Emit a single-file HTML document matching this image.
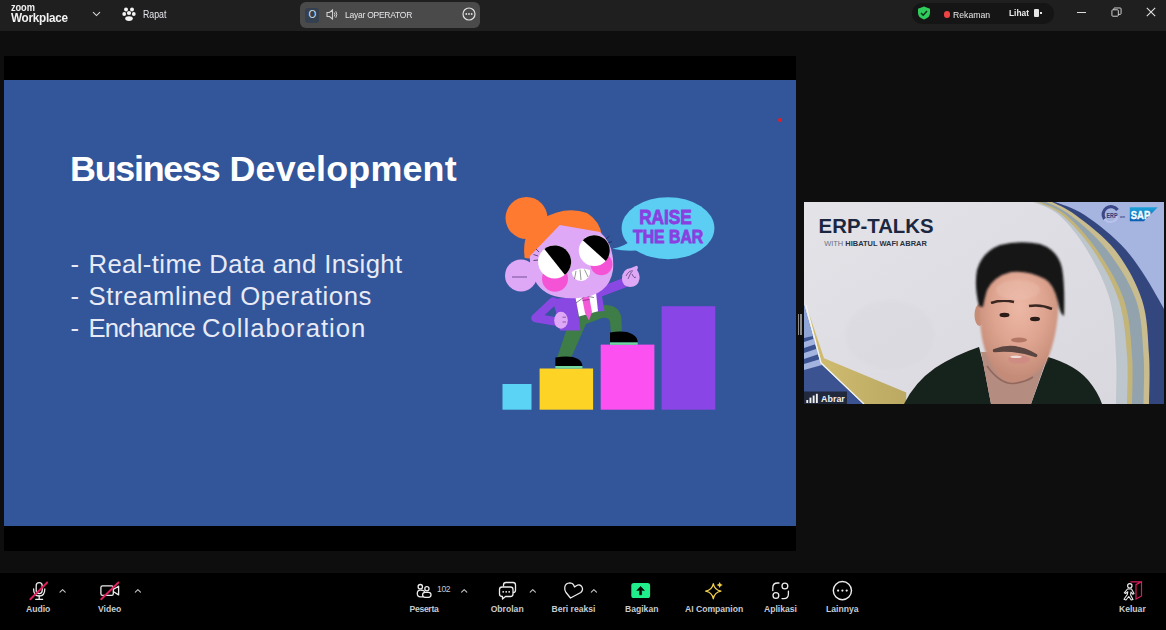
<!DOCTYPE html>
<html><head><meta charset="utf-8">
<style>
*{margin:0;padding:0;box-sizing:border-box}
html,body{width:1166px;height:630px;overflow:hidden;background:#0e0e0e;font-family:"Liberation Sans",sans-serif}
.a{position:absolute}
.t{position:absolute;white-space:nowrap;line-height:1}
#top{left:0;top:0;width:1166px;height:31px;background:#1f1f1f}
#bar{left:0;top:573px;width:1166px;height:57px;background:#000}
.lbl{position:absolute;white-space:nowrap;line-height:1;color:#c9cbcf;font-weight:bold;font-size:8.6px;top:604.6px}
</style></head>
<body>
<!-- TOP BAR -->
<div id="top" class="a">
  <div class="t" style="left:10.8px;top:1.6px;font-size:10.5px;font-weight:bold;color:#f2f2f2;letter-spacing:-0.1px;transform:scaleX(0.88);transform-origin:0 0">zoom</div>
  <div class="t" style="left:11px;top:11px;font-size:13.4px;font-weight:bold;color:#f2f2f2;letter-spacing:-0.3px;transform:scaleX(0.875);transform-origin:0 0">Workplace</div>
  <svg class="a" style="left:92px;top:11px" width="9" height="6" viewBox="0 0 9 6"><path d="M1 1.2 L4.5 4.6 L8 1.2" fill="none" stroke="#d8d8d8" stroke-width="1.1"/></svg>
  <svg class="a" style="left:122px;top:7px" width="14" height="14" viewBox="0 0 14 14" fill="#f4f4f4">
    <circle cx="4" cy="2.6" r="2"/><circle cx="10" cy="2.6" r="2"/><circle cx="7" cy="6" r="2.1"/>
    <circle cx="2.2" cy="7" r="1.9"/><circle cx="11.8" cy="7" r="1.9"/><ellipse cx="7" cy="11.6" rx="3.8" ry="2.3"/>
  </svg>
  <div class="t" style="left:143.3px;top:10.2px;font-size:10px;color:#e6e8ee;transform:scaleX(0.876);transform-origin:0 0">Rapat</div>

  <div class="a" style="left:300px;top:2px;width:180px;height:26px;border-radius:6px;background:#4a4a4a"></div>
  <div class="a" style="left:305px;top:8px;width:14px;height:15px;border-radius:3px;background:#34404f"></div>
  <div class="t" style="left:308.5px;top:10px;font-size:10px;color:#cfe0f0">O</div>
  <svg class="a" style="left:326px;top:9px" width="12" height="11" viewBox="0 0 12 11"><path d="M1 3.5 H3.5 L6.5 1 V10 L3.5 7.5 H1 Z" fill="none" stroke="#cfcfcf" stroke-width="1.1"/><path d="M8.3 3.5 Q9.6 5.5 8.3 7.5 M9.8 2.2 Q11.8 5.5 9.8 8.8" fill="none" stroke="#cfcfcf" stroke-width="1"/></svg>
  <div class="t" style="left:344.5px;top:10.3px;font-size:9.9px;color:#e6e6ea;letter-spacing:-0.3px;transform:scaleX(0.863);transform-origin:0 0">Layar OPERATOR</div>
  <svg class="a" style="left:462px;top:7px" width="14" height="14" viewBox="0 0 14 14"><circle cx="7" cy="7" r="6" fill="none" stroke="#e0e0e0" stroke-width="1.2"/><circle cx="4.3" cy="7" r="0.9" fill="#e0e0e0"/><circle cx="7" cy="7" r="0.9" fill="#e0e0e0"/><circle cx="9.7" cy="7" r="0.9" fill="#e0e0e0"/></svg>

  <div class="a" style="left:912px;top:3px;width:142px;height:21px;border-radius:10px;background:#151515"></div>
  <svg class="a" style="left:917px;top:6px" width="14" height="14" viewBox="0 0 14 14"><path d="M7 0.5 L13 2.8 V7 Q13 11.5 7 13.5 Q1 11.5 1 7 V2.8 Z" fill="#2fcc5c"/><path d="M4 7 L6.2 9.2 L10 5" fill="none" stroke="#10301a" stroke-width="1.5"/></svg>
  <div class="a" style="left:943.5px;top:11px;width:6.5px;height:6.5px;border-radius:50%;background:#ec4444"></div>
  <div class="t" style="left:953px;top:10.3px;font-size:9.8px;color:#e8e8ea;transform:scaleX(0.885);transform-origin:0 0">Rekaman</div>
  <div class="t" style="left:1008.5px;top:7.8px;font-size:9.6px;color:#eaeaea;transform:scaleX(0.87);transform-origin:0 0;font-weight:bold">Lihat</div>
  <div class="a" style="left:1034px;top:9px;width:5px;height:8px;background:#e6e6e6;border-radius:1px"></div>
  <div class="a" style="left:1040px;top:12px;width:2px;height:2px;background:#e6e6e6"></div>

  <div class="a" style="left:1077px;top:12px;width:9px;height:1px;background:#dcdcdc"></div>
  <svg class="a" style="left:1110.5px;top:7.3px" width="11" height="10.2" viewBox="0 0 12 11"><rect x="1" y="3" width="7" height="7" rx="1" fill="none" stroke="#dedede" stroke-width="1"/><path d="M3 3 V2 Q3 1 4 1 H10 Q11 1 11 2 V7 Q11 8 10 8 H8" fill="none" stroke="#dedede" stroke-width="1"/></svg>
  <svg class="a" style="left:1146px;top:7px" width="10" height="10" viewBox="0 0 10 10"><path d="M0.8 0.8 L9.2 9.2 M9.2 0.8 L0.8 9.2" stroke="#e2e2e2" stroke-width="1.1"/></svg>
</div>

<!-- SLIDE -->
<div class="a" style="left:4px;top:56px;width:792px;height:495px;background:#000"></div>
<div class="a" id="slide" style="left:4px;top:80px;width:792px;height:446px;background:#325699"></div>
<div class="t" style="left:70px;top:152.2px;font-size:35.9px;font-weight:bold;color:#fff;letter-spacing:-1.28px">Business</div>
<div class="t" style="left:229.5px;top:152.2px;font-size:35.9px;font-weight:bold;color:#fff;letter-spacing:0.18px">Development</div>
<div class="t" style="left:70.5px;top:252.4px;font-size:25.7px;color:#e8eaf6">-</div>
<div class="t" style="left:88.5px;top:252.4px;font-size:25.7px;color:#e8eaf6;letter-spacing:0.38px">Real-time Data and Insight</div>
<div class="t" style="left:70.5px;top:284.2px;font-size:25.7px;color:#e8eaf6">-</div>
<div class="t" style="left:88.5px;top:284.2px;font-size:25.7px;color:#e8eaf6;letter-spacing:0.62px">Streamlined Operations</div>
<div class="t" style="left:70.5px;top:316.1px;font-size:25.7px;color:#e8eaf6">-</div>
<div class="t" style="left:88.5px;top:316.1px;font-size:25.7px;color:#e8eaf6;letter-spacing:-1.0px">Enchance</div>
<div class="t" style="left:202px;top:316.1px;font-size:25.7px;color:#e8eaf6;letter-spacing:1.0px">Collaboration</div>
<div class="a" style="left:777.5px;top:118px;width:4px;height:4px;border-radius:50%;background:#e02020"></div>
<svg class="a" style="left:0;top:0" width="1166" height="630" viewBox="0 0 1166 630">
  <!-- bars -->
  <rect x="502.5" y="384" width="29" height="25.7" fill="#5ad3f5"/>
  <rect x="539.6" y="368.5" width="53.5" height="41.2" fill="#fdd326"/>
  <rect x="600.7" y="344.6" width="53.7" height="65.1" fill="#fd50f0"/>
  <rect x="661.6" y="306.2" width="53.7" height="103.5" fill="#8945e6"/>
  <!-- speech bubble -->
  <path d="M612.4 248.8 Q626 246 631 240 L640 250 Q628 252 612.4 248.8Z" fill="#5ccdf3"/>
  <ellipse cx="668" cy="228.2" rx="46.4" ry="31" fill="#5ccdf3"/>
  <text x="639.2" y="224" font-family="Liberation Sans" font-weight="bold" font-size="20" fill="#8a3fe0" stroke="#8a3fe0" stroke-width="0.9" textLength="52.6" lengthAdjust="spacingAndGlyphs">RAISE</text>
  <text x="633" y="242.6" font-family="Liberation Sans" font-weight="bold" font-size="19" fill="#8a3fe0" stroke="#8a3fe0" stroke-width="0.9" textLength="70.2" lengthAdjust="spacingAndGlyphs">THE BAR</text>
  <!-- legs -->
  <path d="M578 309 L606 305 Q621 306 621.5 320 L622 334 L611 334 L610 322 Q609 317 602 318 L586 324 L571 358 L557 358 L567 328 Z" fill="#3e7c48"/>
  <!-- shoes -->
  <path d="M555.4 366 L555.4 357.5 Q571 355 578 359 Q582.4 362 582.4 366 Z" fill="#000"/>
  <rect x="555.4" y="366" width="27" height="2.6" fill="#72d8a0"/>
  <path d="M610 342.4 L610 332.5 Q625 330 632 334 Q637.7 337 637.7 342.4 Z" fill="#000"/>
  <rect x="610" y="342.4" width="27.7" height="2.4" fill="#72d8a0"/>
  <!-- jacket -->
  <path d="M552 299 L576 297 L580.5 330.4 L560 330.4 L556 312 Z" fill="#8a48e2"/>
  <path d="M553 301.5 L535.5 318 L556 321.5" stroke="#8a48e2" stroke-width="8.5" fill="none" stroke-linecap="round" stroke-linejoin="round"/>
  <path d="M589 291 L601 290.5 L604.5 311 L592 312 Z" fill="#8a48e2"/>
  <path d="M596 293.5 L625 282.5" stroke="#8a48e2" stroke-width="9.5" fill="none" stroke-linecap="round"/>
  <!-- shirt & tie -->
  <path d="M575.5 297.7 L596 292.5 L598 311.2 L579 316.4 Z" fill="#fff"/>
  <path d="M582 297.5 L589 295.8 L592 312 L589 320.4 L585 313 Z" fill="#f25ad8"/>
  <path d="M576 303 L585.5 296 L594 297.5" stroke="#3a2a50" stroke-width="0.6" fill="none"/>
  <path d="M582.5 300.5 L589.5 299.5" stroke="#8a2a80" stroke-width="0.8"/>
  <!-- hands -->
  <ellipse cx="561" cy="320.2" rx="6.8" ry="8.5" fill="#dea8f6"/>
  <path d="M562.5 317.2 h3.5 M562.5 322 h3.5" stroke="#6a3a90" stroke-width="0.7"/>
  <path d="M622 279 Q622 269 631 268 L636.5 265.8 Q639 266.5 637 270 Q640 274 639.5 279 Q638 287 630 287 Q622 286 622 279 Z" fill="#dea8f6"/>
  <path d="M626 276 Q629 270 633 271 M628 279 Q630 274 631.5 272 M632 274 Q634 279 636 277" stroke="#3a2050" stroke-width="0.6" fill="none"/>
  <!-- hair -->
  <circle cx="526.5" cy="218" r="21" fill="#fd7a30"/>
  <path d="M524.7 258 Q521 232 540 220 Q565 205 587 213 Q600 221 602 236 L560 262 Z" fill="#fd7a30"/>
  <!-- ear -->
  <circle cx="521" cy="275.5" r="16" fill="#dea8f6"/>
  <path d="M512 277 H527" stroke="#5a3a80" stroke-width="0.8"/>
  <!-- head -->
  <path d="M559.8 225 L600 232 Q615 245 613 270 Q609 296 578 298 Q548 300 537 284 Q529 272 530 256 Z" fill="#dea8f6"/>
  <!-- cheeks -->
  <circle cx="555" cy="278.7" r="13" fill="#f553d6"/>
  <circle cx="601.4" cy="264.3" r="11" fill="#f553d6"/>
  <!-- eyes -->
  <circle cx="554.6" cy="261.9" r="16.5" fill="#fff"/>
  <path d="M544.37 248.95 A16.5 16.5 0 0 1 564.83 274.85 Z" fill="#000"/>
  <circle cx="594.3" cy="250.6" r="15.5" fill="#fff"/>
  <path d="M582.78 240.23 A15.5 15.5 0 0 1 605.82 260.97 Z" fill="#000"/>
  <path d="M538 256 l-4.5 -1.5 M538 260 l-4.5 0.5 M539 252 l-3 -3" stroke="#2a1a40" stroke-width="0.7"/>
  <path d="M606 239 l3.5 -3 M608 243 l4 -1.5" stroke="#2a1a40" stroke-width="0.7"/>
  <!-- teeth -->
  <path d="M571.7 272 Q580 266 590 270 Q591 279 582 281 Q573 281 571.7 272Z" fill="#fff"/>
  <path d="M576 271 L574.5 279 M580 269.5 L581 280 M584.5 269.5 L588 277" stroke="#333" stroke-width="0.5"/>
</svg>

<!-- VIDEO -->
<div class="a" style="left:798px;top:314px;width:1.4px;height:21px;background:#8a8a8a"></div>
<div class="a" style="left:800.4px;top:314px;width:1.4px;height:21px;background:#8a8a8a"></div>
<svg class="a" id="video" style="left:804px;top:202px" width="360" height="202" viewBox="804 202 360 202">
  <defs>
    <linearGradient id="bgG" x1="0" y1="0" x2="1" y2="1">
      <stop offset="0" stop-color="#e4e3e8"/><stop offset="0.5" stop-color="#dedde3"/><stop offset="1" stop-color="#d8d8de"/>
    </linearGradient>
    <linearGradient id="goldG" x1="0" y1="0" x2="1" y2="0">
      <stop offset="0" stop-color="#d2bf72"/><stop offset="1" stop-color="#bba862"/>
    </linearGradient>
    <radialGradient id="skinG" cx="0.5" cy="0.35" r="0.6">
      <stop offset="0" stop-color="#ecb8a6"/><stop offset="0.55" stop-color="#dea490"/><stop offset="1" stop-color="#c48c78"/>
    </radialGradient>
    <filter id="bl" x="-10%" y="-10%" width="120%" height="120%"><feGaussianBlur stdDeviation="1.2"/></filter>
    <filter id="bl2" x="-20%" y="-20%" width="140%" height="140%"><feGaussianBlur stdDeviation="0.6"/></filter>
    <filter id="bl3" x="-20%" y="-20%" width="140%" height="140%"><feGaussianBlur stdDeviation="0.9"/></filter>
  </defs>
  <rect x="804" y="202" width="360" height="202" fill="#a6b5e0"/>
  <path d="M804 202 L1055.0 202.0 C1059.9 204.2 1072.8 207.0 1084.6 215.0 C1096.4 223.0 1113.6 235.8 1126.0 250.0 C1138.4 264.2 1151.7 286.7 1159.0 300.0 C1166.3 313.3 1167.2 312.7 1170.0 330.0 C1172.8 347.3 1175.0 391.7 1176.0 404.0 L804 404 Z" fill="#34467e"/>
  <path d="M804 202 L1052.0 202.0 C1055.9 204.2 1065.0 207.0 1075.5 215.0 C1086.0 223.0 1103.9 235.8 1115.0 250.0 C1126.1 264.2 1136.3 282.5 1142.0 300.0 C1147.7 317.5 1147.8 337.7 1149.0 355.0 C1150.2 372.3 1149.0 395.8 1149.0 404.0 L804 404 Z" fill="#c9bc8e"/>
  <path d="M804 202 L1046.0 202.0 C1050.0 204.2 1059.8 207.0 1070.0 215.0 C1080.2 223.0 1096.0 235.8 1107.0 250.0 C1118.0 264.2 1129.9 282.5 1136.0 300.0 C1142.1 317.5 1142.2 337.7 1143.5 355.0 C1144.8 372.3 1143.5 395.8 1143.5 404.0 L804 404 Z" fill="#92a3ad"/>
  <path d="M804 202 L1040.0 202.0 C1044.3 204.2 1056.5 207.0 1066.0 215.0 C1075.5 223.0 1087.3 235.8 1097.0 250.0 C1106.7 264.2 1118.2 282.5 1124.0 300.0 C1129.8 317.5 1130.7 337.7 1132.0 355.0 C1133.3 372.3 1132.0 395.8 1132.0 404.0 L804 404 Z" fill="#c3b47a"/>
  <path d="M804 202 L1037.0 202.0 C1041.2 204.2 1052.7 207.0 1062.0 215.0 C1071.3 223.0 1083.5 235.8 1093.0 250.0 C1102.5 264.2 1113.0 282.5 1118.7 300.0 C1124.4 317.5 1125.6 337.7 1127.0 355.0 C1128.4 372.3 1127.0 395.8 1127.0 404.0 L804 404 Z" fill="#bcc6cc"/>
  <path d="M804 202 L1033.0 202.0 C1037.3 204.2 1050.0 207.0 1059.0 215.0 C1068.0 223.0 1078.5 235.8 1087.0 250.0 C1095.5 264.2 1105.2 282.5 1110.0 300.0 C1114.8 317.5 1115.0 337.7 1116.0 355.0 C1117.0 372.3 1116.0 395.8 1116.0 404.0 L804 404 Z" fill="url(#bgG)"/>
  <ellipse cx="890" cy="335" rx="45" ry="35" fill="#cfcfd5" opacity="0.15" filter="url(#bl)"/>
  <!-- left deco -->
  <path d="M804 305 L820.6 363.4 L863.4 404 L804 404 Z" fill="#3c5391"/>
  <path d="M804 305 L813 336 L804 338 Z" fill="#8fa5d8"/>
  <path d="M804 342 L814.5 338.5 L816 344 L804 348 Z" fill="#a3b4e0"/>
  <path d="M804 353 L817.5 348.5 L819 354 L804 359 Z" fill="#a3b4e0"/>
  <path d="M804 364 L820.5 359 L822 365 L804 370 Z" fill="#a3b4e0"/>
  <path d="M806.5 306 L824 358.3 L906.3 392.6 L906 404 L864 404 L821.5 363 Z" fill="url(#goldG)"/>
  <path d="M806 305 L821 363 L864 404" stroke="#f4f4f2" stroke-width="1.3" fill="none"/>
  <!-- person -->
  <path d="M904 404 Q915 382 935 368 Q955 355 979 347 L983 362 L991 404 Z" fill="#19201c" filter="url(#bl2)"/>
  <path d="M1031 404 L1048 357 Q1075 365 1088 380 Q1098 392 1102 404 Z" fill="#19201c" filter="url(#bl2)"/>
  <path d="M981 352 L1049 352 L1031 404 L991 404 Z" fill="#b48c80" filter="url(#bl2)"/>
  <ellipse cx="979.5" cy="315" rx="5" ry="11" fill="#c68c76" filter="url(#bl2)"/>
  <path d="M980 296 Q978 336 988 358 Q1000 383 1013 383.5 Q1030 382 1046 362 Q1058 338 1059 296 Q1057 268 1020 266 Q983 268 980 296 Z" fill="url(#skinG)" filter="url(#bl3)"/>
  <path d="M987 366 Q1000 384 1013 383.5 Q1026 382 1033 377" stroke="#7a5048" stroke-width="1.6" fill="none" opacity="0.6" filter="url(#bl2)"/>
  <ellipse cx="1018" cy="290" rx="22" ry="10" fill="#f0c4b6" opacity="0.35" filter="url(#bl)"/>
  <path d="M979 306 Q974 286 977 270 Q982 252 1000 245 Q1020 240 1040 244 Q1058 250 1062 268 Q1065 285 1064 316 Q1060 314 1058 302 Q1054 284 1045 279 Q1028 270 1011 272 Q994 276 987 290 Q984 300 983 307 Z" fill="#171918" filter="url(#bl3)"/>
  <path d="M991 303 Q1002 299 1014 302" stroke="#3a2822" stroke-width="2.6" fill="none" filter="url(#bl2)"/>
  <path d="M1029 306 Q1041 304 1052 309" stroke="#3a2822" stroke-width="2.6" fill="none" filter="url(#bl2)"/>
  <ellipse cx="1004.5" cy="315" rx="5" ry="2.2" fill="#2a1a18" filter="url(#bl2)"/>
  <ellipse cx="1035" cy="319" rx="5" ry="2.2" fill="#2a1a18" filter="url(#bl2)"/>
  <ellipse cx="1019" cy="340" rx="8" ry="2.6" fill="#a86a5a" opacity="0.8" filter="url(#bl2)"/>
  <ellipse cx="1019" cy="359.5" rx="11" ry="4.2" fill="#cf8c82" filter="url(#bl2)"/>
  <ellipse cx="1016" cy="356.8" rx="6" ry="1.3" fill="#f0dcd4" filter="url(#bl2)"/>
  <path d="M994.5 350.5 Q1015 342.5 1035.6 355.5 Q1015 348.5 994.5 350.5 Z" stroke="#5a4440" stroke-width="3.4" fill="#5a4440" stroke-linejoin="round" filter="url(#bl2)"/>
  <!-- text -->
  <text x="818.6" y="233.3" font-family="Liberation Sans" font-weight="bold" font-size="20.3" fill="#1b2740" textLength="115" lengthAdjust="spacingAndGlyphs">ERP-TALKS</text>
  <text x="824.2" y="245.5" font-family="Liberation Sans" font-weight="bold" font-size="8.1" fill="#2a3040" textLength="102.6" lengthAdjust="spacingAndGlyphs"><tspan fill="#6b707c" font-weight="normal">WITH </tspan>HIBATUL WAFI ABRAR</text>
  <!-- logos -->
  <path d="M1104.5 219 A7.2 7.2 0 1 1 1117.5 210" stroke="#3a4788" stroke-width="3.2" fill="none"/>
  <path d="M1117.5 216 A7.2 7.2 0 0 1 1104.5 219" stroke="#b8c2ea" stroke-width="2" fill="none"/>
  <text x="1106.5" y="218" font-family="Liberation Sans" font-weight="bold" font-size="7" fill="#2e3a7a" textLength="11" lengthAdjust="spacingAndGlyphs">ERP</text>
  <text x="1120" y="217.5" font-family="Liberation Sans" font-weight="bold" font-size="4" fill="#3a4788">on</text>
  <linearGradient id="sapG" x1="0" y1="0" x2="0" y2="1"><stop offset="0" stop-color="#1ea2da"/><stop offset="1" stop-color="#0b5cb0"/></linearGradient>
  <path d="M1129.8 207.3 L1157.8 207.3 L1143.8 221.3 L1129.8 221.3 Z" fill="url(#sapG)"/>
  <text x="1130.8" y="219" font-family="Liberation Sans" font-weight="bold" font-size="11" fill="#f2fbff" stroke="#f2fbff" stroke-width="0.4" textLength="19.5" lengthAdjust="spacingAndGlyphs">SAP</text>
  <!-- label -->
  <rect x="804" y="391.5" width="43" height="12.5" fill="#1c2029" opacity="0.82"/>
  <rect x="806.3" y="400" width="1.9" height="3" fill="#f0f0f0"/>
  <rect x="809.5" y="397.6" width="1.9" height="5.4" fill="#f0f0f0"/>
  <rect x="812.7" y="395.5" width="1.9" height="7.5" fill="#f0f0f0"/>
  <rect x="815.9" y="393.8" width="1.9" height="9.2" fill="#f0f0f0"/>
  <text x="821.1" y="402.1" font-family="Liberation Sans" font-weight="bold" font-size="9.6" fill="#eef0f0" textLength="23.7" lengthAdjust="spacingAndGlyphs">Abrar</text>
</svg>

<!-- TOOLBAR -->
<div id="bar" class="a"></div>
<svg class="a" style="left:0;top:573px" width="1166" height="57" viewBox="0 573 1166 57">
  <g fill="none" stroke="#ececec" stroke-width="1.3" stroke-linecap="round" stroke-linejoin="round">
    <!-- audio -->
    <rect x="36.2" y="582.6" width="6" height="11" rx="3"/>
    <path d="M33.6 589 Q33.6 596 39.2 596 Q44.8 596 44.8 589"/>
    <path d="M39.2 596 V599.3 M35.8 599.4 H42.6"/>
    <path d="M60 592.2 L62.6 589.7 L65.2 592.2" stroke="#c4c4c4" stroke-width="1.1"/>
    <!-- video -->
    <rect x="100.9" y="585.9" width="12.4" height="9.4" rx="1.6"/>
    <path d="M113.6 589.3 L118.6 586.2 V594.9 L113.6 591.8"/>
    <path d="M135.3 592.2 L137.9 589.7 L140.5 592.2" stroke="#c4c4c4" stroke-width="1.1"/>
    <!-- peserta -->
    <circle cx="420.3" cy="586.7" r="2.2"/>
    <path d="M424.5 591.3 Q423 590.2 420.3 590.2 Q417.3 590.2 417.3 593.5 Q417.3 596.8 420.3 596.8 H423"/>
    <circle cx="426.9" cy="588.8" r="2.1"/>
    <rect x="422.6" y="592.3" width="8.4" height="5" rx="2.5"/>
    <path d="M461.6 592.2 L464.2 589.7 L466.8 592.2" stroke="#c4c4c4" stroke-width="1.1"/>
    <!-- obrolan -->
    <path d="M503.5 586 V585 Q503.5 582.5 506 582.5 H513 Q515.5 582.5 515.5 585 V590 Q515.5 592.5 513.5 592.5"/>
    <path d="M502 587 H510.5 Q513 587 513 589.5 V594 Q513 596.5 510.5 596.5 H505.5 L502.5 599 V596.5 Q499.5 596.5 499.5 594 V589.5 Q499.5 587 502 587 Z"/>
    <path d="M530.2 592.2 L532.8 589.7 L535.4 592.2" stroke="#c4c4c4" stroke-width="1.1"/>
    <!-- heart -->
    <path d="M570.5 598 L580.8 592.5 Q583.5 590 582 587 Q580 583.5 576 586 L574.5 587 Q573.5 583 570 582.8 Q565.5 583 564.8 587 Q564.3 590 566 592.5 Z"/>
    <path d="M591.3 592.2 L593.9 589.7 L596.5 592.2" stroke="#c4c4c4" stroke-width="1.1"/>
    <!-- aplikasi -->
    <path d="M772.8 590.5 V587.8 Q772.8 583 777.6 583 H779"/>
    <path d="M788.4 591.2 V594 Q788.4 598.6 783.8 598.6 H782"/>
    <circle cx="784.9" cy="586" r="2.9"/>
    <circle cx="775.9" cy="595.5" r="2.9"/>
    <!-- lainnya -->
    <circle cx="842.4" cy="590.6" r="9.1" stroke-width="1.4"/>
    <!-- keluar figure -->
    <circle cx="1129.8" cy="585.8" r="2.2" stroke-width="1.2"/>
    <path d="M1127.5 589 L1131.5 589 L1134 593.5 L1132.8 594.2 L1131 592 L1130.6 595 L1133 599.5 L1131.2 600 L1128.8 596.5 L1126 600 L1124 599.3 L1127.3 594.5 L1127.8 591.8 L1125.5 593.5 L1124.3 592.8 Z" stroke-width="1.1"/>
  </g>
  <g fill="#ececec">
    <circle cx="838.1" cy="590.6" r="1.1"/><circle cx="842.4" cy="590.6" r="1.1"/><circle cx="846.7" cy="590.6" r="1.1"/>
    <circle cx="503.2" cy="591.8" r="0.9"/><circle cx="506.2" cy="591.8" r="0.9"/><circle cx="509.2" cy="591.8" r="0.9"/>
  </g>
  <!-- slashes -->
  <path d="M30.3 599.2 L47.2 582.5" stroke="#e0205c" stroke-width="1.9" stroke-linecap="round"/>
  <path d="M101.2 599.2 L118.4 582.5" stroke="#e0205c" stroke-width="1.9" stroke-linecap="round"/>
  <!-- door -->
  <path d="M1130.4 581.8 H1141.5 V596 M1136 584.6 L1141.5 581.8 V596 L1136 599 Z" fill="none" stroke="#d81e5b" stroke-width="1.2"/>
  <!-- bagikan -->
  <rect x="631.3" y="583" width="18.8" height="15" rx="2.6" fill="#20ee8c"/>
  <path d="M636.8 590.6 L640.6 586.4 L644.4 590.6 L642.2 590.2 L641.6 589.6 V594.8 H639.6 V589.6 L639 590.2 Z" fill="#000" stroke="#000" stroke-width="0.6" stroke-linejoin="round"/>
  <!-- ai companion -->
  <path d="M713.3 583.6 Q714.5 590 721 591.2 Q714.5 592.4 713.3 598.8 Q712.1 592.4 705.6 591.2 Q712.1 590 713.3 583.6 Z" fill="none" stroke="#f0d04a" stroke-width="1.2" stroke-linejoin="round"/>
  <path d="M719.7 581.9 Q720.2 584.6 722.8 585 Q720.2 585.4 719.7 588.1 Q719.2 585.4 716.6 585 Q719.2 584.6 719.7 581.9 Z" fill="#f0d04a"/>
</svg>
<div class="t" style="left:437px;top:585px;font-size:8.6px;color:#c9c9cb;letter-spacing:-0.4px">102</div>
<div class="lbl" style="left:26px">Audio</div>
<div class="lbl" style="left:98px">Video</div>
<div class="lbl" style="left:409.5px;letter-spacing:-0.3px">Peserta</div>
<div class="lbl" style="left:490.7px">Obrolan</div>
<div class="lbl" style="left:551.5px">Beri reaksi</div>
<div class="lbl" style="left:625px">Bagikan</div>
<div class="lbl" style="left:685px">AI Companion</div>
<div class="lbl" style="left:764px">Aplikasi</div>
<div class="lbl" style="left:826px">Lainnya</div>
<div class="lbl" style="left:1119px">Keluar</div>
</body></html>
